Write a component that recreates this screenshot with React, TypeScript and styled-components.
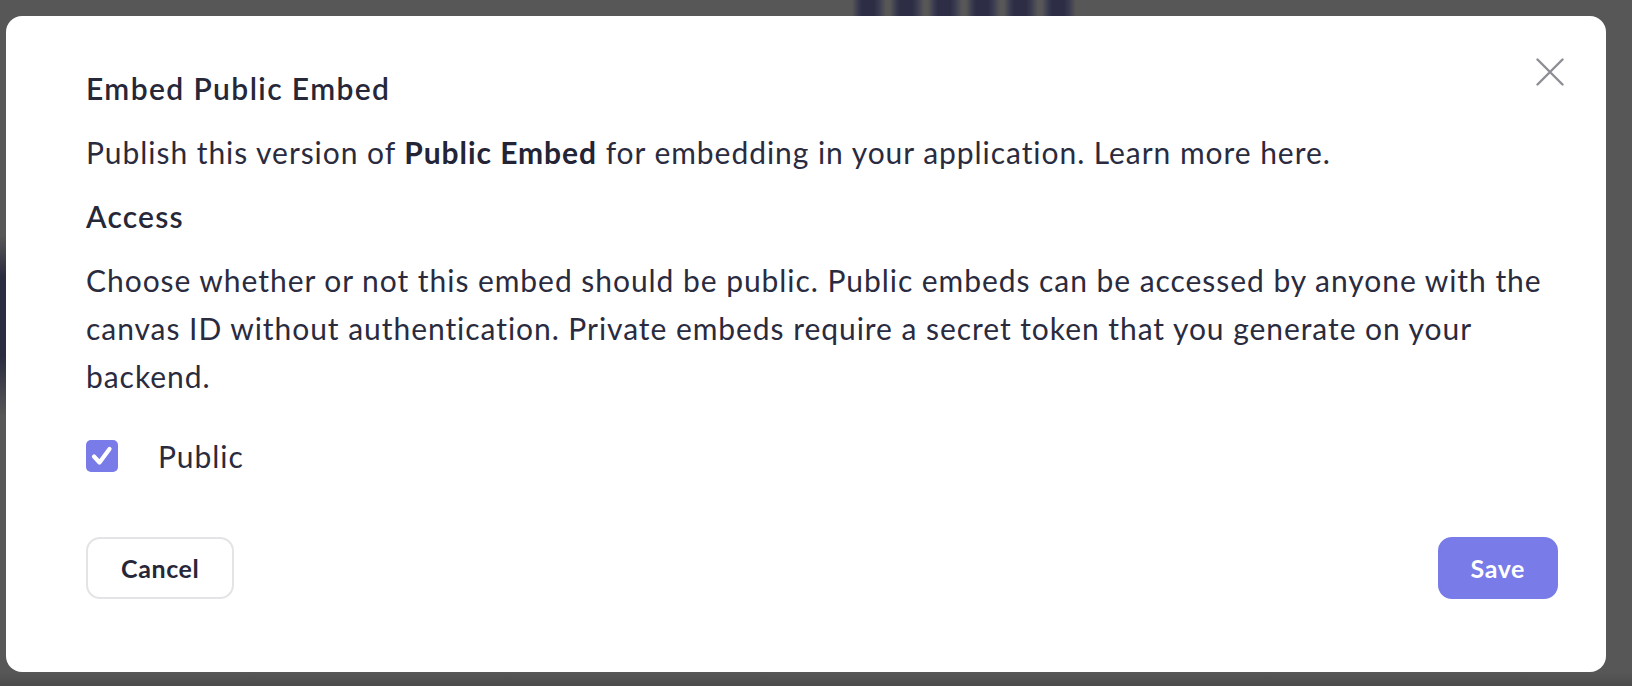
import React, { useState } from "react";
import styled, { createGlobalStyle } from "styled-components";

const GlobalStyle = createGlobalStyle`
  html, body {
    margin: 0;
    padding: 0;
    background: #575757;
  }
  * { box-sizing: border-box; }
`;

const Backdrop = styled.div`
  width: 1632px;
  height: 686px;
  overflow: hidden;
  padding: 16px 0 0 6px;
  background-color: #575757;
  background-image:
    repeating-linear-gradient(90deg, #575757 0, #3a3b50 6px, #2d2e45 10px, #2d2e45 22px, #3a3b50 27px, #575757 34px, #575757 38px),
    linear-gradient(180deg, #575757 0, #2b2c40 40px, #2b2c40 120px, #575757 180px),
    linear-gradient(180deg, #575757 0, #4b4b4b 100%);
  background-position: 852px 0, 0 236px, 0 672px;
  background-size: 228px 16px, 6px 190px, 1632px 14px;
  background-repeat: no-repeat;
  font-family: "Lato", "Noto Sans", sans-serif;
`;

const Dialog = styled.div`
  position: relative;
  width: 1600px;
  height: 656px;
  background: #ffffff;
  border-radius: 16px;
  padding: 48px 48px 0 80px;
  display: flex;
  flex-direction: column;
  color: #2a2b3e;
`;

const CloseButton = styled.button`
  position: absolute;
  top: 42px;
  right: 42px;
  width: 28px;
  height: 28px;
  padding: 0;
  border: none;
  background: transparent;
  cursor: pointer;
  display: flex;
  align-items: center;
  justify-content: center;
`;

const Title = styled.h2`
  margin: 0;
  font-size: 30px;
  line-height: 48px;
  font-weight: 600;
  letter-spacing: 1.4px;
  color: #262738;
`;

const SectionTitle = styled.h3`
  margin: 16px 0 0;
  font-size: 30px;
  line-height: 48px;
  font-weight: 600;
  letter-spacing: 1.2px;
  color: #262738;
`;

const Paragraph = styled.p`
  margin: 16px 0 0;
  font-size: 30px;
  line-height: 48px;
  font-weight: 400;
  letter-spacing: 0.95px;
  color: #2a2b3e;
  max-width: 1478px;
  strong {
    font-weight: 700;
    color: #232435;
  }
`;

const CheckRow = styled.label`
  margin-top: 32px;
  display: flex;
  align-items: center;
  gap: 40px;
  height: 48px;
  cursor: pointer;
`;

const CheckBox = styled.span<{ $checked: boolean }>`
  width: 32px;
  height: 32px;
  border-radius: 5px;
  background: ${(p) => (p.$checked ? "#787be8" : "#ffffff")};
  border: ${(p) => (p.$checked ? "none" : "2px solid #c8c8d0")};
  display: flex;
  align-items: center;
  justify-content: center;
`;

const CheckLabel = styled.span`
  font-size: 30px;
  line-height: 48px;
  letter-spacing: 0.95px;
  color: #2a2b3e;
`;

const Footer = styled.div`
  margin-top: 57px;
  display: flex;
  justify-content: space-between;
  align-items: center;
`;

const Button = styled.button<{ $primary?: boolean }>`
  height: 62px;
  padding: 0 ${(p) => (p.$primary ? "31px" : "33px")};
  border-radius: 14px;
  font-family: "Lato", "Noto Sans", sans-serif;
  font-size: 25px;
  font-weight: 700;
  letter-spacing: 0.6px;
  cursor: pointer;
  border: 2px solid ${(p) => (p.$primary ? "#787be8" : "#e4e4e7")};
  background: ${(p) => (p.$primary ? "#787be8" : "#ffffff")};
  color: ${(p) => (p.$primary ? "#ffffff" : "#262738")};
`;

export default function App() {
  const [isPublic, setIsPublic] = useState(true);
  return (
    <>
      <GlobalStyle />
      <Backdrop>
        <Dialog role="dialog" aria-labelledby="embed-title">
          <CloseButton aria-label="Close">
            <svg width="28" height="28" viewBox="0 0 28 28" fill="none">
              <path d="M1.5 1.5 L26.5 26.5 M26.5 1.5 L1.5 26.5" stroke="#8d8d95" strokeWidth="2.4" strokeLinecap="round" />
            </svg>
          </CloseButton>
          <Title id="embed-title">Embed Public Embed</Title>
          <Paragraph>
            Publish this version of <strong>Public Embed</strong> for embedding in your application. Learn more here.
          </Paragraph>
          <SectionTitle>Access</SectionTitle>
          <Paragraph>
            Choose whether or not this embed should be public. Public embeds can be accessed by anyone with the canvas ID without authentication. Private embeds require a secret token that you generate on your backend.
          </Paragraph>
          <CheckRow onClick={() => setIsPublic((v) => !v)}>
            <CheckBox $checked={isPublic} role="checkbox" aria-checked={isPublic}>
              {isPublic && (
                <svg width="24" height="24" viewBox="0 0 24 24" fill="none">
                  <path d="M4 12.5 L9.5 18.5 L19.5 5" stroke="#ffffff" strokeWidth="4.2" strokeLinecap="round" strokeLinejoin="round" />
                </svg>
              )}
            </CheckBox>
            <CheckLabel>Public</CheckLabel>
          </CheckRow>
          <Footer>
            <Button>Cancel</Button>
            <Button $primary>Save</Button>
          </Footer>
        </Dialog>
      </Backdrop>
    </>
  );
}
